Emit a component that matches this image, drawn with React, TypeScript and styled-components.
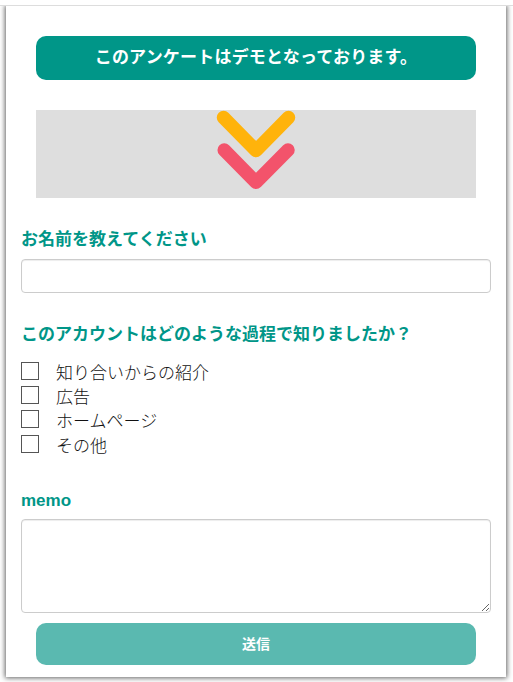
import React from "react";
import styled, { createGlobalStyle } from "styled-components";

const GlobalStyle = createGlobalStyle`
  *, *::before, *::after { box-sizing: border-box; }
  html, body { margin: 0; padding: 0; background: #fff; }
  body {
    font-family: "Liberation Sans", "Noto Sans CJK JP", sans-serif;
    font-size: 17px;
    color: #333;
    overflow: hidden;
  }
`;

const Page = styled.main`
  height: 682px;
  padding: 5px 7px 5px 6px;
  overflow: hidden;
`;

const TopRule = styled.hr`
  height: 1px;
  margin: 0 -7px 0 -6px;
  border: 0;
  background: #ddd;
`;

const Clip = styled.div`
  margin: 0 -7px -5px -6px;
  padding: 0 7px 5px 6px;
  overflow: hidden;
`;

const Card = styled.form`
  display: flex;
  flex-direction: column;
  height: 671px;
  padding: 30px 15px 0;
  background: #fff;
  box-shadow: 0 0 5px 1px rgba(0, 0, 0, 0.62);
`;

const Banner = styled.h1`
  flex: none;
  margin: 0 15px 30px;
  height: 44px;
  border-radius: 10px;
  background: #009688;
  color: #fff;
  font-size: 17px;
  font-weight: 700;
  letter-spacing: 0.2px;
  line-height: 44px;
  text-align: center;
`;

const Hero = styled.div`
  flex: none;
  margin: 0 15px;
  height: 88px;
  background: #dedede;

  svg { display: block; margin: 0 auto; }
`;

const Field = styled.section<{ $top: number }>`
  display: flex;
  flex-direction: column;
  flex: none;
  margin-top: ${(p) => p.$top}px;
`;

const Label = styled.label<{ $gap: number }>`
  height: 24px;
  margin-bottom: ${(p) => p.$gap}px;
  color: #009688;
  font-weight: 700;
  line-height: 24px;
`;

const TextInput = styled.input`
  width: 100%;
  height: 34px;
  padding: 6px 12px;
  border: 1px solid #ccc;
  border-radius: 4px;
  background: #fff;
  box-shadow: inset 0 1px 1px rgba(0, 0, 0, 0.075);
  outline: none;
`;

const TextArea = styled.textarea`
  display: block;
  width: 100%;
  height: 94px;
  padding: 6px 12px;
  border: 1px solid #ccc;
  border-radius: 4px;
  background: #fff;
  box-shadow: inset 0 1px 1px rgba(0, 0, 0, 0.075);
  outline: none;
  resize: both;
`;

const Options = styled.div`
  display: grid;
  grid-template-rows: 24px 24px 25px 24px;
`;

const Option = styled.label`
  display: flex;
  align-items: flex-start;
  gap: 17px;
  line-height: 24px;
`;

const Checkbox = styled.input`
  appearance: none;
  flex: none;
  width: 18px;
  height: 18px;
  margin: 0;
  border: 1px solid #555;
  background: #fff;

  &:checked { background: #009688; }
`;

const OptionText = styled.span`
  color: #111;
  font-weight: 300;
  white-space: nowrap;
`;

const Submit = styled.button`
  flex: none;
  height: 42px;
  margin: 10px 15px 0;
  padding: 0;
  border: 0;
  border-radius: 10px;
  background: #5ab9b0;
  color: #fff;
  font: 700 14px/42px "Liberation Sans", "Noto Sans CJK JP", sans-serif;
`;

const choices = ["知り合いからの紹介", "広告", "ホームページ", "その他"];

function Chevrons() {
  return (
    <svg width="88" height="88" viewBox="0 0 88 88" fill="none" strokeWidth="13.5" strokeLinecap="round" strokeLinejoin="round">
      <path d="M11.5 7.5 44 40.5 76.5 7.5" stroke="#ffb30b" />
      <path d="M12.2 40 44 72.3 76 40" stroke="#f3536b" />
    </svg>
  );
}

export default function App() {
  return (
    <>
      <GlobalStyle />
      <Page>
        <TopRule />
        <Clip>
          <Card onSubmit={(e) => e.preventDefault()}>
            <Banner>このアンケートはデモとなっております。</Banner>
            <Hero>
              <Chevrons />
            </Hero>
            <Field $top={30}>
              <Label $gap={7} htmlFor="name">お名前を教えてください</Label>
              <TextInput id="name" type="text" />
            </Field>
            <Field $top={30}>
              <Label $gap={15} as="div">このアカウントはどのような過程で知りましたか？</Label>
              <Options>
                {choices.map((choice) => (
                  <Option key={choice}>
                    <Checkbox type="checkbox" />
                    <OptionText>{choice}</OptionText>
                  </Option>
                ))}
              </Options>
            </Field>
            <Field $top={30}>
              <Label $gap={6} htmlFor="memo">memo</Label>
              <TextArea id="memo" />
            </Field>
            <Submit type="submit">送信</Submit>
          </Card>
        </Clip>
      </Page>
    </>
  );
}
